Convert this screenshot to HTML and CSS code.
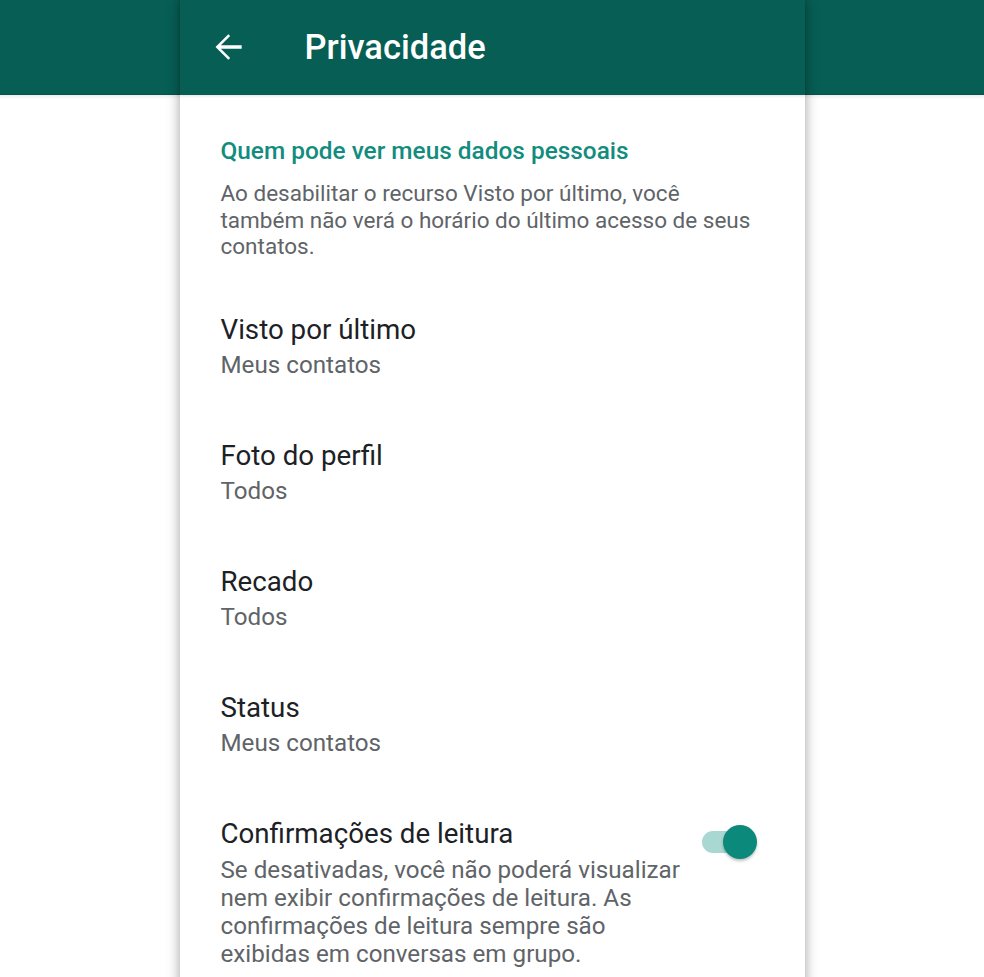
FILE: index.html
```html
<!DOCTYPE html>
<html lang="pt-BR">
<head>
<meta charset="utf-8">
<title>Privacidade</title>
<link rel="stylesheet" href="styles.css">
</head>
<body>
<main class="screen">
  <header class="appbar">
    <button class="back" aria-label="Voltar">
      <svg viewBox="0 0 24 24" width="40" height="40"><path d="M20.2 11H7.7l5.6-5.6L12.2 4.3 4.5 12l7.7 7.7 1.1-1.1-5.6-5.6h12.5z" fill="#fff"/></svg>
    </button>
    <h1 class="title">Privacidade</h1>
  </header>

  <section class="group">
    <h2 class="group-title">Quem pode ver meus dados pessoais</h2>
    <p class="group-desc">Ao desabilitar o recurso Visto por último, você também não verá o horário do último acesso de seus contatos.</p>

    <ul class="items">
      <li class="item">
        <div class="item-text">
          <div class="item-title">Visto por último</div>
          <div class="item-sub">Meus contatos</div>
        </div>
      </li>
      <li class="item">
        <div class="item-text">
          <div class="item-title">Foto do perfil</div>
          <div class="item-sub">Todos</div>
        </div>
      </li>
      <li class="item">
        <div class="item-text">
          <div class="item-title">Recado</div>
          <div class="item-sub">Todos</div>
        </div>
      </li>
      <li class="item">
        <div class="item-text">
          <div class="item-title">Status</div>
          <div class="item-sub">Meus contatos</div>
        </div>
      </li>
      <li class="item item-switch">
        <div class="item-text">
          <div class="item-title">Confirmações de leitura</div>
          <div class="item-desc">Se desativadas, você não poderá visualizar nem exibir confirmações de leitura. As confirmações de leitura sempre são exibidas em conversas em grupo.</div>
        </div>
        <span class="switch on"><span class="track"></span><span class="thumb"></span></span>
      </li>
    </ul>
  </section>
</main>
</body>
</html>
```

FILE: styles.css
```css
html, body {
  margin: 0;
  padding: 0;
}

body {
  font-family: Roboto, "Noto Sans", "Liberation Sans", sans-serif;
  background:
    linear-gradient(to bottom,
      #075e54 0, #075e54 94px,
      #05544b 94px, #05544b 95px,
      rgba(0, 0, 0, 0.07) 95px, #ffffff 99px);
  background-repeat: no-repeat;
  background-color: #ffffff;
  min-height: 100vh;
  overflow: hidden;
}

.screen {
  width: 625px;
  margin: 0 auto;
  min-height: 100vh;
  background: #ffffff;
  box-shadow: 0 0 12px rgba(0, 0, 0, 0.38);
}

/* top bar */
.appbar {
  height: 95px;
  background: #075e54;
  display: flex;
  align-items: center;
  box-shadow: 0 1px 3px rgba(0, 0, 0, 0.12);
}

.back {
  width: 40px;
  height: 40px;
  margin-left: 28px;
  margin-top: -2px;
  padding: 0;
  border: 0;
  background: none;
  display: flex;
}

.title {
  margin: -2px 0 0 57px;
  color: #ffffff;
  font-size: 34.5px;
  font-weight: 500;
  line-height: 40px;
}

/* settings group */
.group {
  padding-top: 42px;
}

.group-title {
  margin: 0 41px;
  font-size: 24.4px;
  line-height: 28px;
  font-weight: 500;
  color: #128c7e;
}

.group-desc {
  margin: 15px 41px 0;
  font-size: 22.5px;
  line-height: 26.5px;
  color: #5f6468;
}

.items {
  list-style: none;
  margin: 28px 0 0;
  padding: 0;
}

.item {
  display: flex;
  align-items: flex-start;
  padding: 26px 41px 35px;
}

.item-text {
  flex: 1;
  min-width: 0;
}

.item-title {
  font-size: 27.7px;
  line-height: 32px;
  color: #1c2125;
}

.item-sub {
  margin-top: 5px;
  font-size: 24.2px;
  line-height: 28px;
  color: #5f6468;
}

.item-desc {
  margin-top: 6px;
  font-size: 24.2px;
  line-height: 28px;
  color: #5f6468;
  padding-right: 5px;
}

/* toggle switch */
.switch {
  position: relative;
  width: 55px;
  height: 34px;
  margin-top: 7px;
  margin-right: 7px;
  flex: none;
}

.switch .track {
  position: absolute;
  left: 0;
  top: 6px;
  width: 48px;
  height: 22px;
  border-radius: 11px;
  background: #a9d7d1;
}

.switch .thumb {
  position: absolute;
  right: 0;
  top: 0;
  width: 34px;
  height: 34px;
  border-radius: 50%;
  background: #0b8a7b;
  box-shadow: 0 2px 3px rgba(0, 0, 0, 0.25);
}
```
